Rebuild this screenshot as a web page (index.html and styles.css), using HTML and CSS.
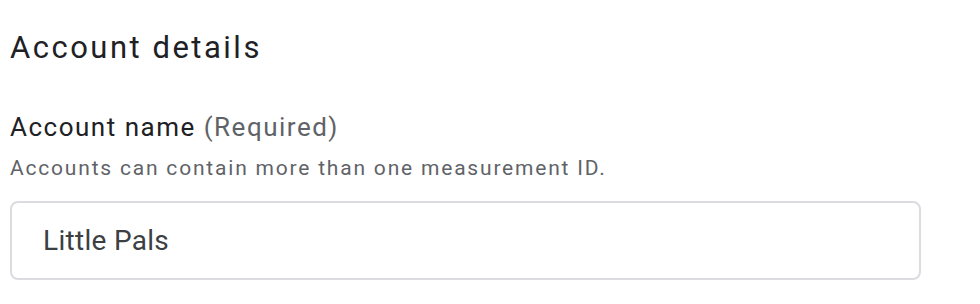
FILE: index.html
```html
<!DOCTYPE html>
<html lang="en">
<head>
<meta charset="utf-8">
<title>Account details</title>
<link rel="stylesheet" href="styles.css">
</head>
<body>
<section class="panel">
  <h1 class="title">Account details</h1>
  <div class="field">
    <label class="label" for="acct">Account name <span class="req">(Required)</span></label>
    <p class="help">Accounts can contain more than one measurement ID.</p>
    <div class="input-box">
      <input class="input" id="acct" type="text" value="Little Pals">
    </div>
  </div>
</section>
</body>
</html>
```
FILE: styles.css
```css
html, body {
  margin: 0;
  padding: 0;
  background: #ffffff;
}
body {
  font-family: Roboto, "Noto Sans", Arial, sans-serif;
  color: #202124;
}
.panel {
  padding: 28px 0 0 10px;
}
.title {
  margin: 0;
  font-size: 31px;
  font-weight: 400;
  line-height: 40px;
  letter-spacing: 2.5px;
  color: #202124;
}
.field {
  margin-top: 42px;
}
.label {
  display: block;
  font-size: 26px;
  line-height: 34px;
  letter-spacing: 1.5px;
  color: #202124;
}
.req {
  color: #5f6368;
}
.help {
  margin: 10px 0 0;
  font-size: 21px;
  line-height: 28px;
  letter-spacing: 1.8px;
  color: #5f6368;
}
.input-box {
  margin-top: 19px;
  width: 911px;
  height: 79px;
  border: 2px solid #dadce0;
  border-radius: 8px;
  display: flex;
  align-items: center;
  box-sizing: border-box;
}
.input {
  border: 0;
  outline: none;
  background: transparent;
  padding: 0 0 0 31px;
  font-family: Roboto, "Noto Sans", Arial, sans-serif;
  font-size: 28px;
  letter-spacing: 0.3px;
  color: #3c4043;
  width: 100%;
}
```
